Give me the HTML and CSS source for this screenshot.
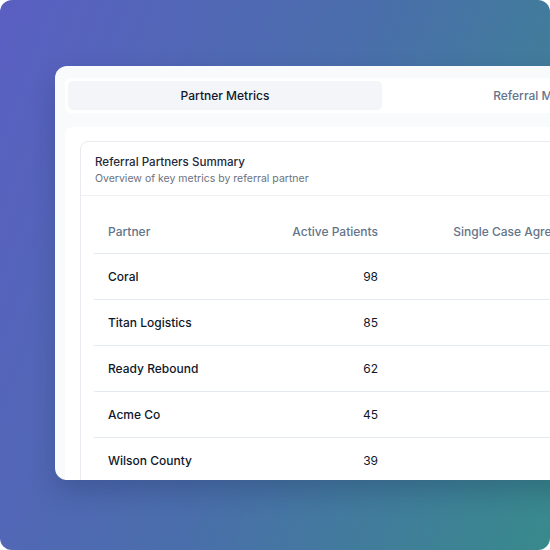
FILE: index.html
```html
<!DOCTYPE html>
<html>
<head>
<meta charset="utf-8">
<link rel="stylesheet" href="styles.css">
</head>
<body>
<div class="stage">
  <div class="window">
    <div class="tabs">
      <div class="tab active">Partner Metrics</div>
      <div class="tab">Referral Metrics</div>
    </div>
    <div class="panel">
      <div class="card">
        <div class="card-head">
          <div class="card-title">Referral Partners Summary</div>
          <div class="card-sub">Overview of key metrics by referral partner</div>
        </div>
        <div class="card-body">
          <table class="tbl">
            <thead>
              <tr><th class="c1">Partner</th><th class="c2">Active Patients</th><th class="c3">Single Case Agreements</th></tr>
            </thead>
            <tbody>
              <tr><td class="c1">Coral</td><td class="c2">98</td><td class="c3">12</td></tr>
              <tr><td class="c1">Titan Logistics</td><td class="c2">85</td><td class="c3">9</td></tr>
              <tr><td class="c1">Ready Rebound</td><td class="c2">62</td><td class="c3">7</td></tr>
              <tr><td class="c1">Acme Co</td><td class="c2">45</td><td class="c3">5</td></tr>
              <tr><td class="c1">Wilson County</td><td class="c2">39</td><td class="c3">4</td></tr>
            </tbody>
          </table>
        </div>
      </div>
    </div>
  </div>
</div>
</body>
</html>
```

FILE: styles.css
```css
* { box-sizing: border-box; }
html, body { margin: 0; padding: 0; background: #fff; }
body { font-family: Inter, "Noto Sans", sans-serif; }

.stage {
  width: 550px;
  height: 550px;
  border-radius: 12px;
  overflow: hidden;
  background: linear-gradient(110deg, #5a5fc2 0%, #4a6eab 50%, #388a8c 100%);
  padding: 66px 0 0 55px;
}

.window {
  width: 720px;
  height: 414px;
  background: #f8fafc;
  border-radius: 12px;
  overflow: hidden;
  padding: 12px 0 0 10px;
  box-shadow: 0 12px 24px rgba(20, 30, 70, 0.22);
}

.tabs {
  display: flex;
  width: 634px;
  height: 35px;
  padding: 3px;
  background: #ffffff;
  border-radius: 6px;
}
.tab {
  flex: 1;
  display: flex;
  align-items: center;
  justify-content: center;
  font-size: 12px;
  font-weight: 500;
  color: #64748b;
  border-radius: 5px;
}
.tab.active {
  background: #f3f5f8;
  color: #0f172a;
}

.panel {
  margin-top: 14px;
  background: #ffffff;
  border-radius: 8px 0 0 0;
  padding: 14px 0 0 15px;
  height: 400px;
}

.card {
  border: 1px solid #e8ebef;
  border-radius: 8px;
  height: 400px;
}
.card-head {
  padding: 12px 14px 9px;
  border-bottom: 1px solid #eef0f3;
}
.card-title {
  font-size: 11.6px;
  line-height: 16px;
  font-weight: 500;
  color: #1e293b;
}
.card-sub {
  font-size: 10.5px;
  line-height: 15px;
  color: #6b7280;
  margin-top: 1px;
}
.card-body {
  padding: 14px 13px 0;
}

.tbl {
  border-collapse: collapse;
  table-layout: fixed;
  width: 512px;
  font-size: 12px;
}
.tbl th {
  height: 43px;
  font-weight: 500;
  color: #64748b;
  text-align: left;
  border-bottom: 1px solid #e5e9f0;
  padding: 0 14px;
  white-space: nowrap;
}
.tbl td {
  height: 46px;
  color: #0f172a;
  border-bottom: 1px solid #e5e9f0;
  padding: 0 14px;
  white-space: nowrap;
}
.tbl .c1 { width: 160px; }
.tbl td.c1 { font-weight: 500; }
.tbl .c2 { width: 138px; text-align: right; }
.tbl .c3 { width: 214px; text-align: right; padding-right: 12px; }
```
